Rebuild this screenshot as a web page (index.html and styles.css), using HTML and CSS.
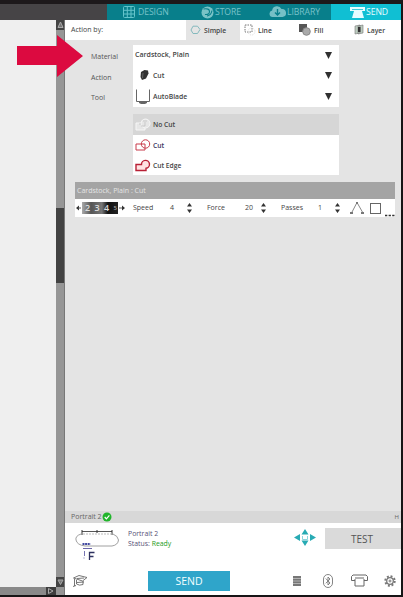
FILE: index.html
```html
<!DOCTYPE html>
<html lang="en">
<head>
<meta charset="utf-8">
<title>Send panel</title>
<link rel="stylesheet" href="styles.css">
</head>
<body>
<div class="app">
  <header class="topbar">
    <div class="dark"></div>
    <nav class="nav">
      <a class="tab design"><svg width="12" height="12" viewBox="0 0 12 12" fill="none" stroke="#64c4cb"><rect x=".5" y=".5" width="11" height="11" rx="1"/><path d="M4.3 0v12M8 0v12M0 4.3h12M0 8h12"/></svg><span>DESIGN</span></a>
      <a class="tab store"><svg width="13" height="13" viewBox="0 0 13 13"><circle cx="6.5" cy="6.5" r="6" fill="#79c3c7"/><path d="M2.500 3q6-1 6 2.500T4 8.500M11 4.500q-1 5-5 5.500" fill="none" stroke="#087f8b" stroke-width="1.1"/></svg><span>STORE</span></a>
      <a class="tab library"><svg width="17" height="12" viewBox="0 0 17 12"><path d="M3.5 11a3.3 3.3 0 0 1-.4-6.5A5 5 0 0 1 12.5 3a4 4 0 0 1 1 8z" fill="#76c0c6"/><path d="M8.5 3v6M6 6.5 8.5 9 11 6.5" fill="none" stroke="#087f8b" stroke-width="1.4"/></svg><span>LIBRARY</span></a>
      <a class="tab send"><svg width="17" height="12" viewBox="0 0 17 12" fill="#e4fcff"><path d="M1 1h15v4h-3l2 7H3l2-7H1z"/><path d="M3 3.5h11" stroke="#12bed2" stroke-width=".8"/></svg><span>SEND</span></a>
    </nav>
  </header>

  <main class="work">
    <section class="left">
      <div class="canvas"></div>
      <div class="hscroll"><i><svg width="9" height="8" viewBox="0 0 9 8"><path d="M2.5 1.5 7 4 2.5 6.5z" fill="none" stroke="#aaa"/></svg></i></div>
    </section>
    <div class="vscroll">
      <i><svg width="9" height="10" viewBox="0 0 9 10"><path d="M4.5 2 7 7.5H2z" fill="#777" stroke="#aaa"/></svg></i>
      <div class="track"><b></b></div>
      <i><svg width="9" height="10" viewBox="0 0 9 10"><path d="M2 3h5L4.5 7.5z" fill="#777" stroke="#aaa"/></svg></i>
    </div>

    <section class="panel">
      <div class="modes">
        <span class="by">Action by:</span>
        <span class="mode active"><svg width="11" height="10" viewBox="0 0 11 10"><path d="M3 1.2h4.5L10 4.5 7.5 8.5H3L1 5z" fill="none" stroke="#84b9bd"/></svg>Simple</span>
        <span class="mode line"><svg width="12" height="12" viewBox="0 0 12 12" fill="none" stroke="#777"><rect x="1" y="1" width="7" height="7" stroke-dasharray="1.5 1"/><circle cx="7.5" cy="7.5" r="3.5" stroke="#ddd" stroke-dasharray="1 1"/></svg>Line</span>
        <span class="mode fill"><svg width="12" height="12" viewBox="0 0 12 12"><path d="M0 0h8v8H0z" fill="#555"/><circle cx="7.5" cy="7.5" r="3.8" fill="#aaa" stroke="#888"/></svg>Fill</span>
        <span class="mode layer"><svg width="11" height="11" viewBox="0 0 11 11"><path d="M1 2 6 1v8L1 10zM4 2l5-1v8l-5 1z" fill="#bcccbf" stroke="#777" stroke-width=".6"/><path d="M4 3h2.5v5H4z" fill="#333"/></svg>Layer</span>
      </div>

      <div class="settings">
        <div class="labels"><span>Material</span><span>Action</span><span>Tool</span></div>
        <div class="selects">
          <div class="select"><span class="name material">Cardstock, Plain</span><svg class="caret" width="7" height="7"><path d="M0 0h7L3.5 7z"/></svg></div>
          <div class="select"><svg class="tool" width="15" height="13" viewBox="0 0 15 13"><path d="M6 3 9.500 1 13 1.500l.5 3L11 9.500 7 11 5.500 8z" fill="#333"/><path d="M8 4 7.500 9" stroke="#777" stroke-width=".7"/></svg><span class="name cut">Cut</span><svg class="caret" width="7" height="7"><path d="M0 0h7L3.5 7z"/></svg></div>
          <div class="select"><svg class="tool" width="15" height="17" viewBox="0 0 15 17"><path d="M1.5 1.500v12H14.500v-12" fill="none" stroke="#666"/><path d="M4 13.500h8V15l-2 1h-4l-2-1z" fill="#666"/></svg><span class="name blade">AutoBlade</span><svg class="caret" width="7" height="7"><path d="M0 0h7L3.5 7z"/></svg></div>
        </div>
      </div>

      <div class="cutlist">
        <div class="opt nocut"><svg width="17" height="14" viewBox="0 0 17 14"><path d="M1 5h9v7H1z" fill="#e6e6e6" stroke="#f6f6f6"/><circle cx="10.5" cy="5.5" r="4.5" fill="#e6e6e6" stroke="#f6f6f6"/><path d="M5 5v2M10 4v4H6M8 3h4" stroke="#bbb" stroke-width=".7" fill="none"/></svg><span>No Cut</span></div>
        <div class="opt cut2"><svg width="17" height="14" viewBox="0 0 17 14" fill="none" stroke="#c83b4a"><path d="M1 5h9v6H1z"/><circle cx="10.5" cy="5" r="4.2"/></svg><span>Cut</span></div>
        <div class="opt edge"><svg width="17" height="14" viewBox="0 0 17 14"><path d="M1 5.500h5.500A4 4 0 1 1 11 9.300v2.200H1z" fill="#ffe1e1" stroke="#b82035" stroke-width="1.400"/></svg><span>Cut Edge</span></div>
      </div>

      <div class="job">
        <div class="jobhead"><span>Cardstock, Plain : Cut</span></div>
        <div class="jobrow">
          <svg width="50" height="18" viewBox="0 0 50 18"><path d="M1 9l3-2.500v5zM50 9l-3-2.500v5z" fill="#333"/><path d="M3 9h3M44 9h3" stroke="#555"/></svg>
          <div class="dial"><span>2</span><span>3</span><span>4</span><span class="part">5</span></div>
          <span class="c speed">Speed</span><span class="c n4">4</span>
          <svg class="spin" width="5" height="12"><path d="M2.500 1 5 4.500H0zM0 7.500h5L2.500 11z"/></svg>
          <span class="c force">Force</span><span class="c n20">20</span>
          <svg class="spin s2" width="5" height="12"><path d="M2.500 1 5 4.500H0zM0 7.500h5L2.500 11z"/></svg>
          <span class="c passes">Passes</span><span class="c n1">1</span>
          <svg class="spin s3" width="5" height="12"><path d="M2.500 1 5 4.500H0zM0 7.500h5L2.500 11z"/></svg>
          <svg class="shapes" width="46" height="18" viewBox="0 0 46 18" fill="none" stroke="#666"><path d="M2.500 14 8 3.500 14 14" stroke="#888"/><path d="M1 13h3v2H1zM12 13h3v2h-3zM7 3h2v2H7z" fill="#777" stroke="none"/><rect x="21.500" y="4.500" width="10" height="10"/><path d="M36 16.500h2.300M39.600 16.500h2.300M43.200 16.500h2.300" stroke="#333" stroke-width="1.600"/></svg>
        </div>
      </div>

      <div class="device"><span>Portrait 2</span><svg width="10" height="10" viewBox="0 0 10 10"><circle cx="5" cy="5" r="4.500" fill="#20b52b"/><path d="M2.700 5 4.400 6.800 7.400 3.400" fill="none" stroke="#fff" stroke-width="1.200"/></svg><em>H</em></div>
      <div class="status">
        <svg class="machine" width="48" height="37" viewBox="0 0 48 37" fill="none" stroke="#888"><path d="M8 3.500h30" stroke="#555"/><path d="M8 2v5M38 2v5M23 2v3" stroke="#333"/><path d="M7 6Q1 8 2 12q1 5 9 6h27q6-1 6.500-6Q44 8 39 6" stroke-width=".8"/><path d="M9 6h29" stroke="#bbb" stroke-dasharray="2 1"/><path d="M8.500 16h8" stroke="#4148a0" stroke-width="2" stroke-dasharray="2 .6"/><path d="M9 20.500h9" stroke="#6a66a8"/><path d="M10.500 23v5M9.500 30h1" stroke="#7774b3"/><path d="M15.500 32v-7.500h5M15.500 28.500h4" stroke="#2e315f" stroke-width="1.300"/></svg>
        <div class="info"><span>Portrait 2</span><span>Status: <b>Ready</b></span></div>
        <svg class="move" width="22" height="17" viewBox="0 0 22 17"><g fill="#28abb4"><path d="M11 0 14.500 5.500h-7zM7.500 11.500h7L11 17zM0 8.500 6 5v7zM22 8.500 16 5v7z"/></g><path d="M8.500 7v3.500h5V7" fill="none" stroke="#8bd5dc"/></svg>
        <button class="test">TEST</button>
      </div>
      <footer class="foot">
        <svg class="cap" width="16" height="14" viewBox="0 0 16 14" fill="none" stroke="#666" stroke-width=".9"><path d="M1.500 4 7 1.500l8 2-4.500 3.500zM4.500 6v4q3 2 6.500.5V7M2.500 5v7M1 12.500l3-1M5 8.500l7-.5M5 4.500l7-.5"/></svg>
        <button class="sendbtn">SEND</button>
        <svg class="list" width="10" height="12" viewBox="0 0 10 12"><path d="M1 1h8v10H1z" fill="#777"/><path d="M1 3.500h8M1 6h8M1 8.500h8" stroke="#ccc" stroke-width=".7"/></svg>
        <svg class="bt" width="10" height="14" viewBox="0 0 10 14" fill="none" stroke="#777" stroke-width=".9"><rect x=".5" y=".5" width="9" height="13" rx="4.500"/><path d="M2.800 4.500 7 9l-2 2V3l2 2-4.200 4.300"/></svg>
        <svg class="cutter" width="17" height="13" viewBox="0 0 17 13" fill="none" stroke="#666"><path d="M4 6.500H.5v-4L2 1h13l1.500 1.500v4H13"/><path d="M4 4h9M4 5v7h9V5"/></svg>
        <svg class="gear" width="12" height="12" viewBox="0 0 12 12" fill="none" stroke="#777"><circle cx="6" cy="6" r="4.700" stroke-width="2" stroke-dasharray="1.900 1.790"/><circle cx="6" cy="6" r="3.300" stroke-width="1.300"/><circle cx="6" cy="6" r="1"/></svg>
      </footer>
    </section>
  </main>
  <svg class="arrow" width="67" height="46" viewBox="0 0 67 46"><path d="M0 13h40V2l26 21-26 21V32H0z" fill="#dc0a40"/></svg>
</div>
</body>
</html>
```
FILE: styles.css
```css
* { box-sizing: border-box; }
body { margin: 0; }
.app {
  position: relative; width: 403px; height: 597px; overflow: hidden;
  display: flex; flex-direction: column;
  background: #171516; border-top: 4px solid #1d191b; border-right: 2px solid #171516; border-bottom: 2px solid #171516;
  font: 7px/10px "Open Sans", "Noto Sans", sans-serif; color: #444;
}
svg { display: block; flex: none; }
span { white-space: nowrap; }
button { border: 0; padding: 0; font-family: inherit; }

.topbar { display: flex; height: 16px; flex: none; }
.dark { width: 107px; background: #464446; }
.nav { flex: 1; display: grid; grid-template-columns: 76px 75px 73px 1fr; background: #087f8b; }
.tab { display: flex; align-items: center; gap: 3px; color: #78c2c9; font-size: 8.7px; overflow: hidden; }
.tab span { letter-spacing: -.1px; }
.design { padding-left: 16px; }
.store { padding-left: 18px; gap: 1px; }
.library { padding-left: 11px; gap: 1px; }
.send { background: #10bfd3; color: #e6fcff; padding-left: 18px; gap: 0; }

.work { flex: 1; min-height: 0; display: flex; }
.left { width: 56px; flex: none; display: flex; flex-direction: column; background: #efefef; }
.canvas { flex: 1; }
.hscroll { height: 8px; background: #898989; display: flex; justify-content: flex-end; }
.hscroll i { width: 10px; background: #3d3d3d; }
.vscroll { width: 9px; flex: none; display: flex; flex-direction: column; background: #969696; border-right: 1px solid #777; padding-bottom: 8px; }
.vscroll i { height: 10px; background: #444; overflow: hidden; }
.track { flex: 1; padding-top: 178px; }
.track b { display: block; height: 75px; background: #424242; }

.panel { flex: 1; min-width: 0; display: flex; flex-direction: column; background: #e4e4e4; }
.modes { height: 20px; display: grid; grid-template-columns: 121px 54px 55px 53px 1fr; background: #fff; align-items: center; }
.by { padding-left: 6px; }
.mode { height: 20px; display: flex; align-items: center; font-weight: 600; font-size: 6.8px; gap: 2px; padding-top: 1px; }
.active { background: #e4e4e4; padding-left: 4px; gap: 3px; }
.line { padding-left: 4px; }
.fill { padding-left: 4px; gap: 3px; }
.layer { padding-left: 6px; gap: 2px; }
.mode svg { margin-bottom: 2px; }

.settings { display: flex; margin-top: 5px; height: 62px; }
.labels { width: 68px; padding: 7px 0 0 26px; display: flex; flex-direction: column; gap: 10.5px; color: #555; }
.selects { width: 206px; background: #fff; display: grid; grid-template-rows: 20px 21px 21px; }
.select { display: flex; align-items: center; padding: 0 7px 0 2px; font-weight: 600; font-size: 6.8px; }
.name { flex: 1; }
.material { font-size: 7px; }
.tool + .name { padding: 1px 0 0 3px; }
.caret { fill: #303030; }

.cutlist { width: 206px; height: 61px; margin: 7px 0 0 68px; background: #fff; font-weight: 600; }
.opt { display: flex; align-items: center; gap: 1px; height: 20.5px; padding-left: 2px; font-size: 6.7px; }
.nocut { background: #d6d6d6; }
.nocut { padding-top: 2px; }
.cut2, .edge { padding-top: 2px; }
.cut2 { color: #39345b; }

.job { margin: 7px 6px 0 10px; background: #fff; }
.jobhead { height: 17px; background: #a4a4a4; color: #e4e4e4; line-height: 17px; padding-left: 2px; }
.jobrow { height: 18px; display: grid; grid-template-columns: 50px 8px 37px 17px 20px 38px 16px 20px 37px 17px 14px 46px; align-items: center; }
.jobrow > svg:first-child { grid-column: 1; grid-row: 1; }
.dial { grid-column: 1; grid-row: 1; margin: 0 7px 0 7px; height: 12px; background: linear-gradient(90deg, #aaa, #555 25%, #777 55%, #111 72%, #222); color: #ddd; display: flex; justify-content: space-between; padding: 0 1px 0 3px; font-size: 9px; line-height: 12px; font-weight: 600; }
.part { font-size: 6px; color: #aaa; }
.speed { grid-column: 3; }
.spin { fill: #333; }

.device { margin-top: auto; height: 12px; background: #d8d8d8; display: flex; align-items: center; padding-left: 6px; color: #666; }
.device em { margin-left: auto; font-size: 6px; font-style: normal; padding-right: 2px; }
.status { height: 43px; background: #fff; display: flex; }
.machine { margin: 5px 0 0 9px; }
.info { display: flex; flex-direction: column; margin: 6px 0 0 6px; width: 166px; font-size: 6.9px; line-height: 9.5px; color: #565076; }
.info b { color: #239b24; font-weight: 400; }
.move { margin-top: 6px; }
.test { margin: 5px 0 0 auto; width: 76px; height: 21px; background: #dadada; color: #555; font-size: 10px; padding-right: 2px; }
.foot { height: 29px; background: #fff; display: flex; align-items: center; padding-left: 7px; }
.sendbtn { width: 82px; height: 20px; margin-left: 60px; background: #2fa5ca; color: #f3ffff; font-size: 10.5px; }
.list { margin-left: 62px; }
.bt { margin-left: 21px; }
.cutter { margin-left: 18px; }
.gear { margin-left: 16px; }

.arrow { position: absolute; left: 17px; top: 29px; }
```
